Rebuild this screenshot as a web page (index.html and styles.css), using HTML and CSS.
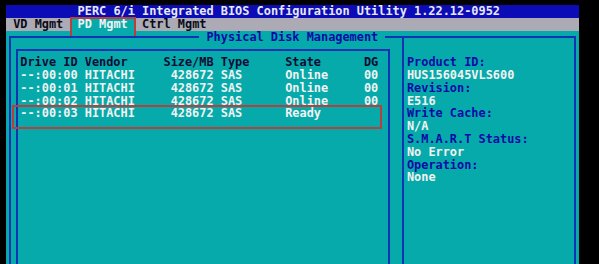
FILE: index.html
```html
<!DOCTYPE html>
<html lang="en">
<head>
<meta charset="utf-8">
<title>PERC 6/i Integrated BIOS Configuration Utility</title>
<link rel="stylesheet" href="styles.css">
</head>
<body>
<div class="screen">
  <header class="titlebar">PERC 6/i Integrated BIOS Configuration Utility 1.22.12-0952</header>
  <nav class="menubar">
    <span class="menu-item">VD Mgmt</span>
    <span class="menu-item active">PD Mgmt</span>
    <span class="menu-item">Ctrl Mgmt</span>
  </nav>
  <section class="panel">
    <h1 class="panel-title">Physical Disk Management</h1>
    <div class="disk-box">
      <div class="disk-row head">
        <span>Drive ID</span><span>Vendor</span><span class="num">Size/MB</span><span class="type">Type</span><span>State</span><span>DG</span>
      </div>
      <div class="disk-row">
        <span>--:00:00</span><span>HITACHI</span><span class="num">428672</span><span class="type">SAS</span><span>Online</span><span>00</span>
      </div>
      <div class="disk-row">
        <span>--:00:01</span><span>HITACHI</span><span class="num">428672</span><span class="type">SAS</span><span>Online</span><span>00</span>
      </div>
      <div class="disk-row">
        <span>--:00:02</span><span>HITACHI</span><span class="num">428672</span><span class="type">SAS</span><span>Online</span><span>00</span>
      </div>
      <div class="disk-row selected">
        <span>--:00:03</span><span>HITACHI</span><span class="num">428672</span><span class="type">SAS</span><span>Ready</span><span></span>
      </div>
    </div>
    <aside class="details">
      <dl class="info">
        <dt>Product ID:</dt>
        <dd>HUS156045VLS600</dd>
        <dt>Revision:</dt>
        <dd>E516</dd>
        <dt>Write Cache:</dt>
        <dd>N/A</dd>
        <dt>S.M.A.R.T Status:</dt>
        <dd>No Error</dd>
        <dt>Operation:</dt>
        <dd>None</dd>
      </dl>
    </aside>
  </section>
</div>
</body>
</html>
```
FILE: styles.css
```css
:root {
  --cw: 7.16px;
  --rh: 12.8px;
  --cyan: #07aaaa;
  --line: #1234b4;
  --navy: #0a0aa6;
  --white: #f2f2f2;
  --annot: #b8403c;
}

html, body {
  margin: 0;
  padding: 0;
  background: #000;
  overflow: hidden;
  height: 100%;
}

.screen {
  position: relative;
  margin: 5px 0 0 6px;
  width: 572.8px;
  height: 259px;
  background: var(--cyan);
  font-family: "DejaVu Sans Mono", "Liberation Mono", monospace;
  font-weight: bold;
  font-size: 11.9px;
  line-height: var(--rh);
  white-space: nowrap;
  overflow: hidden;
}

.titlebar {
  height: var(--rh);
  padding-left: calc(var(--cw) * 10);
  background: #0c0cb6;
  color: #e8e8f2;
}

.menubar {
  display: flex;
  height: var(--rh);
  background: #acaab4;
  color: #0a0a14;
}

.menu-item {
  position: relative;
  padding: 0 var(--cw);
}

.menu-item.active {
  background: var(--cyan);
  color: var(--white);
}

.menu-item.active::after {
  content: "";
  position: absolute;
  left: -0.6px;
  right: -1.2px;
  top: -1.2px;
  bottom: -7.6px;
  border: 2px solid var(--annot);
}

.panel {
  position: relative;
  display: flex;
  align-items: stretch;
  box-sizing: border-box;
  margin: 5.4px 0 0 2.6px;
  width: 567.6px;
  height: 228px;
  border: 2px solid var(--line);
  border-bottom: none;
}

.panel-title {
  position: absolute;
  top: -7.4px;
  left: 188.7px;
  margin: 0;
  padding: 0 var(--cw);
  font-size: inherit;
  font-weight: inherit;
  line-height: var(--rh);
  background: var(--cyan);
  color: var(--navy);
}

.disk-box {
  box-sizing: border-box;
  margin: 10.8px 0 0 5.14px;
  width: 374.32px;
  padding: 5.4px 0 0 2.58px;
  border: 2px solid var(--line);
  border-bottom: none;
}

.disk-row {
  position: relative;
  display: grid;
  grid-template-columns: calc(var(--cw) * 9) calc(var(--cw) * 11) calc(var(--cw) * 7) calc(var(--cw) * 10) calc(var(--cw) * 11) calc(var(--cw) * 2);
  height: var(--rh);
  color: var(--white);
}

.disk-row.head {
  color: #0c0c34;
}

.disk-row .num {
  text-align: right;
}

.disk-row .type {
  padding-left: var(--cw);
}

.disk-row.selected::after {
  content: "";
  position: absolute;
  left: -8.3px;
  top: -2.4px;
  width: 370px;
  height: 24.5px;
  box-sizing: border-box;
  border: 2px solid var(--annot);
}

.details {
  flex: 1;
  margin-left: 12.34px;
  padding: 18.2px 0 0 2.56px;
  border-left: 2px solid var(--line);
}

.info {
  margin: 0;
}

.info dt {
  height: var(--rh);
  color: var(--navy);
}

.info dd {
  height: var(--rh);
  margin: 0;
  color: var(--white);
}
```
